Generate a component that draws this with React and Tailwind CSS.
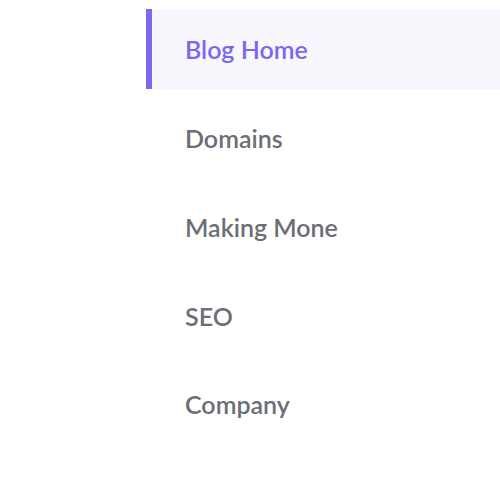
const items = ['Blog Home', 'Domains', 'Making Mone', 'SEO', 'Company']

export default function App() {
  return (
    <div className="h-[500px] w-[500px] overflow-hidden bg-white font-['Lato',sans-serif]">
      <ul className="ml-[146px] mt-[9px] flex flex-col gap-[8.75px]">
        {items.map((label, i) => (
          <li
            key={label}
            className={
              i === 0
                ? 'flex h-[80px] items-center border-l-[6px] border-[#7b68ee] bg-[#f8f7fe] pl-[33px] pt-[2px] text-[25px] font-semibold text-[#7b68ee]'
                : 'flex h-[80px] items-center border-l-[6px] border-transparent pl-[33px] pt-[2px] text-[25px] font-semibold text-[#6b6e75]'
            }
          >
            {label}
          </li>
        ))}
      </ul>
    </div>
  )
}
